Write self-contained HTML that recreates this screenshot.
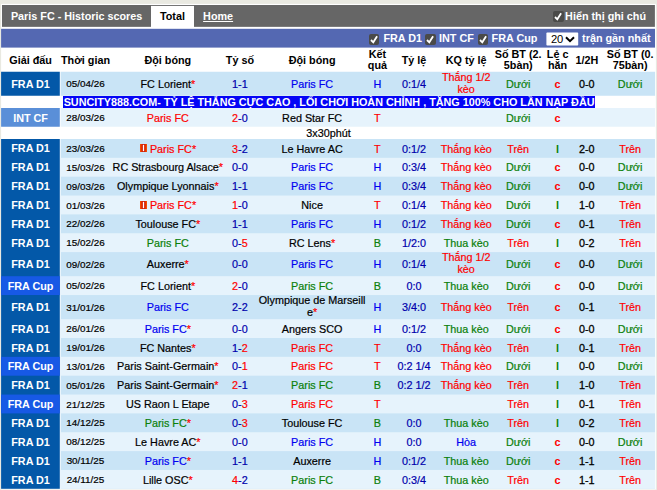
<!DOCTYPE html>
<html lang="vi"><head><meta charset="utf-8"><title>Paris FC - Historic scores</title>
<style>
html,body{margin:0;padding:0}
body{width:657px;height:490px;overflow:hidden;background:#e9e9e1;font-family:"Liberation Sans",Arial,sans-serif;font-size:10.8px;color:#000;position:relative}
#bgsvg{position:absolute;left:0;top:0}
#pg{position:absolute;left:1.3px;top:5px;width:654.2px;height:485px}
.abs{position:absolute}

#ttl{left:9.6px;top:0;height:22px;line-height:22.6px;color:#fff;font-weight:bold;white-space:nowrap}
#tab{left:149.7px;top:1px;width:43px;height:22px;color:#000;font-weight:bold;text-align:center;line-height:20.6px}
#home{left:201.8px;top:0;height:22px;line-height:22.6px;color:#fff;font-weight:bold;text-decoration:underline;white-space:nowrap}
#note{left:563.8px;top:0;height:22px;line-height:22.6px;color:#fff;font-weight:bold;white-space:nowrap}
.cb{position:absolute;width:10.6px;height:10.9px;background:#4a4a48;border-radius:2px}
.cb svg{position:absolute;left:0;top:0}

.bl{position:absolute;top:24px;height:18.5px;line-height:19.5px;color:#fff;font-weight:bold;white-space:nowrap}
#sel{left:545.1px;top:27.6px;width:31.8px;height:12.9px}
#sel span{position:absolute;left:4.5px;top:0;line-height:13.4px;font-size:11.2px;color:#000}
#sel svg{position:absolute;left:18.6px;top:3.3px}
.row{position:absolute;left:0;width:654px}
.bg{position:absolute;left:59.3px;right:0;top:0;bottom:0}

.lg{position:absolute;left:0;top:0;bottom:0;width:58.5px;color:#fff;font-weight:bold;display:flex;align-items:center;justify-content:center;white-space:nowrap;box-sizing:border-box}

.c{position:absolute;top:0;bottom:0;width:140px;display:flex;align-items:center;justify-content:center;text-align:center;white-space:nowrap;line-height:11.7px}
.c>span{display:block;position:relative;top:1px;-webkit-text-stroke:0.2px currentColor}
.h .c>span{top:1px;-webkit-text-stroke:0}
.dt{font-size:9.9px}
.c.dt>span{top:0.5px}
.c.two>span{top:0}
.h .c.two>span{top:1px}
.r{color:#ff0000}.b{color:#0000f0}.n{color:#0000ac}.g{color:#0a800a}.k{color:#000}
.B{font-weight:bold}
.c.B>span{-webkit-text-stroke:0}
.c.hv>span{-webkit-text-stroke:0.28px currentColor}
.h .c{font-weight:bold;line-height:11.5px}
.card{display:inline-block;width:7px;height:8px;background:linear-gradient(to right,#ff5a00,#d01800 35%,#d01800 65%,#ff5a00);vertical-align:0.4px;margin-right:3.4px;position:relative}
.card i{position:absolute;left:3px;top:1px;width:1px;height:6px;background:#fff;box-shadow:0 0 0 0.3px rgba(255,255,255,0.5)}
#ad{position:absolute;left:0.8px;width:654px;top:90.7px;height:12.3px;text-align:center;line-height:12.3px;white-space:nowrap}
#ad span{display:inline-block;height:12.3px;background:#0404f6;color:#fff;font-weight:bold;padding:0 0.5px}
</style></head><body>
<svg id="bgsvg" width="657" height="490" viewBox="0 0 657 490">
<rect x="1.10" y="3.90" width="654.80" height="485.60" fill="#fff"/>
<rect x="2.00" y="5.00" width="652.90" height="21.85" fill="#666"/>
<rect x="151.00" y="5.90" width="43.00" height="22.10" fill="#fff"/>
<rect x="1.10" y="28.80" width="653.90" height="18.80" fill="#5468b2"/>
<rect x="546.40" y="32.60" width="31.80" height="12.90" fill="#fff" rx="0.8"/>
<rect x="1.10" y="139.00" width="58.70" height="349.80" fill="#0358a8"/>
<rect x="60.60" y="139.00" width="594.45" height="349.80" fill="#c9e4f6"/>
<rect x="1.10" y="71.75" width="58.70" height="24.00" fill="#0358a8"/>
<rect x="60.60" y="71.75" width="594.45" height="24.00" fill="#c9e4f6"/>
<rect x="1.10" y="108.00" width="58.70" height="18.75" fill="#5a8fd8"/>
<rect x="60.60" y="108.00" width="594.45" height="18.75" fill="#e6f3fc"/>
<rect x="60.60" y="157.85" width="594.45" height="18.85" fill="#e6f3fc"/>
<rect x="60.60" y="195.55" width="594.45" height="18.85" fill="#e6f3fc"/>
<rect x="60.60" y="233.25" width="594.45" height="18.85" fill="#e6f3fc"/>
<rect x="1.10" y="276.20" width="58.70" height="18.85" fill="#1759e5"/>
<rect x="60.60" y="276.20" width="594.45" height="18.85" fill="#e6f3fc"/>
<rect x="60.60" y="319.15" width="594.45" height="18.85" fill="#e6f3fc"/>
<rect x="1.10" y="356.85" width="58.70" height="18.85" fill="#1759e5"/>
<rect x="60.60" y="356.85" width="594.45" height="18.85" fill="#e6f3fc"/>
<rect x="1.10" y="394.55" width="58.70" height="18.85" fill="#1759e5"/>
<rect x="60.60" y="394.55" width="594.45" height="18.85" fill="#e6f3fc"/>
<rect x="60.60" y="432.25" width="594.45" height="18.85" fill="#e6f3fc"/>
<rect x="60.60" y="469.95" width="594.45" height="18.85" fill="#e6f3fc"/>
</svg><div id="pg">
<div class="abs" id="ttl">Paris FC - Historic scores</div>
<div class="abs" id="tab">Total</div>
<div class="abs" id="home">Home</div>
<div class="cb" style="left:552px;top:6.2px"><svg width="10.6" height="10.9" viewBox="0 0 10.6 10.9"><path d="M2 6 L4.3 8.3 L8.1 2.2" fill="none" stroke="#fff" stroke-width="1.8"/></svg></div>
<div class="abs" id="note">Hiển thị ghi chú</div>

<div class="cb" style="left:367.3px;top:28.9px"><svg width="10.6" height="10.9" viewBox="0 0 10.6 10.9"><path d="M2 6 L4.3 8.3 L8.1 2.2" fill="none" stroke="#fff" stroke-width="1.8"/></svg></div><div class="bl" style="left:382.1px">FRA D1</div>
<div class="cb" style="left:423.8px;top:28.9px"><svg width="10.6" height="10.9" viewBox="0 0 10.6 10.9"><path d="M2 6 L4.3 8.3 L8.1 2.2" fill="none" stroke="#fff" stroke-width="1.8"/></svg></div><div class="bl" style="left:437.7px">INT CF</div>
<div class="cb" style="left:476.5px;top:28.9px"><svg width="10.6" height="10.9" viewBox="0 0 10.6 10.9"><path d="M2 6 L4.3 8.3 L8.1 2.2" fill="none" stroke="#fff" stroke-width="1.8"/></svg></div><div class="bl" style="left:490.3px">FRA Cup</div>
<div class="abs" id="sel"><span>20</span><svg width="10" height="7" viewBox="0 0 10 7"><path d="M1 1.2 L5 5.2 L9 1.2" fill="none" stroke="#000" stroke-width="2"/></svg></div>
<div class="bl" style="left:580.8px">trận gần nhất</div>
<div class="row h" style="top:42.4px;height:24.2px">
<div class="c " style="left:-40.7px"><span>Giải đấu</span></div>
<div class="c " style="left:14.2px"><span>Thời gian</span></div>
<div class="c " style="left:96.5px"><span>Đội bóng</span></div>
<div class="c " style="left:168.6px"><span>Tỷ số</span></div>
<div class="c " style="left:240.8px"><span>Đội bóng</span></div>
<div class="c  two" style="left:306.1px"><span>Kết<br>quả</span></div>
<div class="c " style="left:342.7px"><span>Tỷ lệ</span></div>
<div class="c " style="left:394.9px"><span>KQ tỷ lệ</span></div>
<div class="c  two" style="left:446.9px"><span>Số BT (2.<br>5bàn)</span></div>
<div class="c  two" style="left:486.3px"><span>Lẻ c<br>hẵn</span></div>
<div class="c " style="left:515.5px"><span>1/2H</span></div>
<div class="c  two" style="left:558.8px"><span>Số BT (0.<br>75bàn)</span></div>
</div>
<div id="ad"><span>SUNCITY888.COM- TỶ LỆ THẮNG CỰC CAO , LỐI CHƠI HOÀN CHỈNH , TẶNG 100% CHO LẦN NẠP ĐẦU</span></div>
<div class="row d" style="top:66.75px;height:24.00px"><div class="lg fd">FRA D1</div>
<div class="c dt" style="left:14.2px"><span>05/04/26</span></div>
<div class="c k" style="left:96.5px"><span>FC Lorient<span class="r" style="display:inline">*</span></span></div>
<div class="c n" style="left:168.6px"><span>1-1</span></div>
<div class="c b" style="left:240.8px"><span>Paris FC</span></div>
<div class="c b" style="left:306.1px"><span>H</span></div>
<div class="c n" style="left:342.7px"><span>0:1/4</span></div>
<div class="c r two" style="left:394.9px"><span>Thắng 1/2<br>kèo</span></div>
<div class="c g" style="left:446.9px"><span>Dưới</span></div>
<div class="c r B" style="left:486.3px"><span>c</span></div>
<div class="c k hv" style="left:515.5px"><span>0-0</span></div>
<div class="c g" style="left:558.8px"><span>Dưới</span></div>
</div>
<div class="row l" style="top:103.00px;height:18.75px"><div class="lg ic" style="padding-top:2px">INT CF</div>
<div class="c dt" style="left:14.2px"><span>28/03/26</span></div>
<div class="c r" style="left:96.5px"><span>Paris FC</span></div>
<div class="c n" style="left:168.6px"><span><span class="r" style="display:inline">2</span>-0</span></div>
<div class="c k" style="left:240.8px"><span>Red Star FC</span></div>
<div class="c r" style="left:306.1px"><span>T</span></div>
<div class="c g" style="left:446.9px"><span>Dưới</span></div>
<div class="c r B" style="left:486.3px"><span>c</span></div>
</div>
<div class="row" style="top:121.75px;height:12.25px"><div class="c" style="left:257.2px"><span>3x30phút</span></div></div>
<div class="row d" style="top:134.00px;height:18.85px"><div class="lg fd">FRA D1</div>
<div class="c dt" style="left:14.2px"><span>23/03/26</span></div>
<div class="c r" style="left:96.5px"><span><b class="card"><i></i></b>Paris FC<span class="r" style="display:inline">*</span></span></div>
<div class="c n" style="left:168.6px"><span><span class="r" style="display:inline">3</span>-2</span></div>
<div class="c k" style="left:240.8px"><span>Le Havre AC</span></div>
<div class="c r" style="left:306.1px"><span>T</span></div>
<div class="c n" style="left:342.7px"><span>0:1/2</span></div>
<div class="c r" style="left:394.9px"><span>Thắng kèo</span></div>
<div class="c r" style="left:446.9px"><span>Trên</span></div>
<div class="c g B" style="left:486.3px"><span>l</span></div>
<div class="c k hv" style="left:515.5px"><span>2-0</span></div>
<div class="c r" style="left:558.8px"><span>Trên</span></div>
</div>
<div class="row l" style="top:152.85px;height:18.85px"><div class="lg fd">FRA D1</div>
<div class="c dt" style="left:14.2px"><span>15/03/26</span></div>
<div class="c k" style="left:96.5px"><span>RC Strasbourg Alsace<span class="r" style="display:inline">*</span></span></div>
<div class="c n" style="left:168.6px"><span>0-0</span></div>
<div class="c b" style="left:240.8px"><span>Paris FC</span></div>
<div class="c b" style="left:306.1px"><span>H</span></div>
<div class="c n" style="left:342.7px"><span>0:3/4</span></div>
<div class="c r" style="left:394.9px"><span>Thắng kèo</span></div>
<div class="c g" style="left:446.9px"><span>Dưới</span></div>
<div class="c r B" style="left:486.3px"><span>c</span></div>
<div class="c k hv" style="left:515.5px"><span>0-0</span></div>
<div class="c g" style="left:558.8px"><span>Dưới</span></div>
</div>
<div class="row d" style="top:171.70px;height:18.85px"><div class="lg fd">FRA D1</div>
<div class="c dt" style="left:14.2px"><span>09/03/26</span></div>
<div class="c k" style="left:96.5px"><span>Olympique Lyonnais<span class="r" style="display:inline">*</span></span></div>
<div class="c n" style="left:168.6px"><span>1-1</span></div>
<div class="c b" style="left:240.8px"><span>Paris FC</span></div>
<div class="c b" style="left:306.1px"><span>H</span></div>
<div class="c n" style="left:342.7px"><span>0:3/4</span></div>
<div class="c r" style="left:394.9px"><span>Thắng kèo</span></div>
<div class="c g" style="left:446.9px"><span>Dưới</span></div>
<div class="c r B" style="left:486.3px"><span>c</span></div>
<div class="c k hv" style="left:515.5px"><span>0-0</span></div>
<div class="c g" style="left:558.8px"><span>Dưới</span></div>
</div>
<div class="row l" style="top:190.55px;height:18.85px"><div class="lg fd">FRA D1</div>
<div class="c dt" style="left:14.2px"><span>01/03/26</span></div>
<div class="c r" style="left:96.5px"><span><b class="card"><i></i></b>Paris FC<span class="r" style="display:inline">*</span></span></div>
<div class="c n" style="left:168.6px"><span><span class="r" style="display:inline">1</span>-0</span></div>
<div class="c k" style="left:240.8px"><span>Nice</span></div>
<div class="c r" style="left:306.1px"><span>T</span></div>
<div class="c n" style="left:342.7px"><span>0:1/4</span></div>
<div class="c r" style="left:394.9px"><span>Thắng kèo</span></div>
<div class="c g" style="left:446.9px"><span>Dưới</span></div>
<div class="c g B" style="left:486.3px"><span>l</span></div>
<div class="c k hv" style="left:515.5px"><span>1-0</span></div>
<div class="c r" style="left:558.8px"><span>Trên</span></div>
</div>
<div class="row d" style="top:209.40px;height:18.85px"><div class="lg fd">FRA D1</div>
<div class="c dt" style="left:14.2px"><span>22/02/26</span></div>
<div class="c k" style="left:96.5px"><span>Toulouse FC<span class="r" style="display:inline">*</span></span></div>
<div class="c n" style="left:168.6px"><span>1-1</span></div>
<div class="c b" style="left:240.8px"><span>Paris FC</span></div>
<div class="c b" style="left:306.1px"><span>H</span></div>
<div class="c n" style="left:342.7px"><span>0:1/2</span></div>
<div class="c r" style="left:394.9px"><span>Thắng kèo</span></div>
<div class="c g" style="left:446.9px"><span>Dưới</span></div>
<div class="c r B" style="left:486.3px"><span>c</span></div>
<div class="c k hv" style="left:515.5px"><span>0-1</span></div>
<div class="c r" style="left:558.8px"><span>Trên</span></div>
</div>
<div class="row l" style="top:228.25px;height:18.85px"><div class="lg fd">FRA D1</div>
<div class="c dt" style="left:14.2px"><span>15/02/26</span></div>
<div class="c g" style="left:96.5px"><span>Paris FC</span></div>
<div class="c n" style="left:168.6px"><span>0-<span class="r" style="display:inline">5</span></span></div>
<div class="c k" style="left:240.8px"><span>RC Lens<span class="r" style="display:inline">*</span></span></div>
<div class="c g" style="left:306.1px"><span>B</span></div>
<div class="c n" style="left:342.7px"><span>1/2:0</span></div>
<div class="c g" style="left:394.9px"><span>Thua kèo</span></div>
<div class="c r" style="left:446.9px"><span>Trên</span></div>
<div class="c g B" style="left:486.3px"><span>l</span></div>
<div class="c k hv" style="left:515.5px"><span>0-2</span></div>
<div class="c r" style="left:558.8px"><span>Trên</span></div>
</div>
<div class="row d" style="top:247.10px;height:24.10px"><div class="lg fd">FRA D1</div>
<div class="c dt" style="left:14.2px"><span>09/02/26</span></div>
<div class="c k" style="left:96.5px"><span>Auxerre<span class="r" style="display:inline">*</span></span></div>
<div class="c n" style="left:168.6px"><span>0-0</span></div>
<div class="c b" style="left:240.8px"><span>Paris FC</span></div>
<div class="c b" style="left:306.1px"><span>H</span></div>
<div class="c n" style="left:342.7px"><span>0:1/4</span></div>
<div class="c r two" style="left:394.9px"><span>Thắng 1/2<br>kèo</span></div>
<div class="c g" style="left:446.9px"><span>Dưới</span></div>
<div class="c r B" style="left:486.3px"><span>c</span></div>
<div class="c k hv" style="left:515.5px"><span>0-0</span></div>
<div class="c g" style="left:558.8px"><span>Dưới</span></div>
</div>
<div class="row l" style="top:271.20px;height:18.85px"><div class="lg fc">FRA Cup</div>
<div class="c dt" style="left:14.2px"><span>05/02/26</span></div>
<div class="c k" style="left:96.5px"><span>FC Lorient<span class="r" style="display:inline">*</span></span></div>
<div class="c n" style="left:168.6px"><span><span class="r" style="display:inline">2</span>-0</span></div>
<div class="c g" style="left:240.8px"><span>Paris FC</span></div>
<div class="c g" style="left:306.1px"><span>B</span></div>
<div class="c n" style="left:342.7px"><span>0:0</span></div>
<div class="c g" style="left:394.9px"><span>Thua kèo</span></div>
<div class="c g" style="left:446.9px"><span>Dưới</span></div>
<div class="c r B" style="left:486.3px"><span>c</span></div>
<div class="c k hv" style="left:515.5px"><span>0-0</span></div>
<div class="c g" style="left:558.8px"><span>Dưới</span></div>
</div>
<div class="row d" style="top:290.05px;height:24.10px"><div class="lg fd">FRA D1</div>
<div class="c dt" style="left:14.2px"><span>31/01/26</span></div>
<div class="c b" style="left:96.5px"><span>Paris FC</span></div>
<div class="c n" style="left:168.6px"><span>2-2</span></div>
<div class="c k two" style="left:240.8px"><span>Olympique de Marseill<br>e<span class="r" style="display:inline">*</span></span></div>
<div class="c b" style="left:306.1px"><span>H</span></div>
<div class="c n" style="left:342.7px"><span>3/4:0</span></div>
<div class="c r" style="left:394.9px"><span>Thắng kèo</span></div>
<div class="c r" style="left:446.9px"><span>Trên</span></div>
<div class="c r B" style="left:486.3px"><span>c</span></div>
<div class="c k hv" style="left:515.5px"><span>0-1</span></div>
<div class="c r" style="left:558.8px"><span>Trên</span></div>
</div>
<div class="row l" style="top:314.15px;height:18.85px"><div class="lg fd">FRA D1</div>
<div class="c dt" style="left:14.2px"><span>26/01/26</span></div>
<div class="c b" style="left:96.5px"><span>Paris FC<span class="r" style="display:inline">*</span></span></div>
<div class="c n" style="left:168.6px"><span>0-0</span></div>
<div class="c k" style="left:240.8px"><span>Angers SCO</span></div>
<div class="c b" style="left:306.1px"><span>H</span></div>
<div class="c n" style="left:342.7px"><span>0:1/2</span></div>
<div class="c g" style="left:394.9px"><span>Thua kèo</span></div>
<div class="c g" style="left:446.9px"><span>Dưới</span></div>
<div class="c r B" style="left:486.3px"><span>c</span></div>
<div class="c k hv" style="left:515.5px"><span>0-0</span></div>
<div class="c g" style="left:558.8px"><span>Dưới</span></div>
</div>
<div class="row d" style="top:333.00px;height:18.85px"><div class="lg fd" style="padding-top:2px">FRA D1</div>
<div class="c dt" style="left:14.2px"><span>19/01/26</span></div>
<div class="c k" style="left:96.5px"><span>FC Nantes<span class="r" style="display:inline">*</span></span></div>
<div class="c n" style="left:168.6px"><span>1-<span class="r" style="display:inline">2</span></span></div>
<div class="c r" style="left:240.8px"><span>Paris FC</span></div>
<div class="c r" style="left:306.1px"><span>T</span></div>
<div class="c n" style="left:342.7px"><span>0:0</span></div>
<div class="c r" style="left:394.9px"><span>Thắng kèo</span></div>
<div class="c r" style="left:446.9px"><span>Trên</span></div>
<div class="c g B" style="left:486.3px"><span>l</span></div>
<div class="c k hv" style="left:515.5px"><span>0-1</span></div>
<div class="c r" style="left:558.8px"><span>Trên</span></div>
</div>
<div class="row l" style="top:351.85px;height:18.85px"><div class="lg fc">FRA Cup</div>
<div class="c dt" style="left:14.2px"><span>13/01/26</span></div>
<div class="c k" style="left:96.5px"><span>Paris Saint-Germain<span class="r" style="display:inline">*</span></span></div>
<div class="c n" style="left:168.6px"><span>0-<span class="r" style="display:inline">1</span></span></div>
<div class="c r" style="left:240.8px"><span>Paris FC</span></div>
<div class="c r" style="left:306.1px"><span>T</span></div>
<div class="c n" style="left:342.7px"><span>0:2 1/4</span></div>
<div class="c r" style="left:394.9px"><span>Thắng kèo</span></div>
<div class="c g" style="left:446.9px"><span>Dưới</span></div>
<div class="c g B" style="left:486.3px"><span>l</span></div>
<div class="c k hv" style="left:515.5px"><span>0-0</span></div>
<div class="c g" style="left:558.8px"><span>Dưới</span></div>
</div>
<div class="row d" style="top:370.70px;height:18.85px"><div class="lg fd">FRA D1</div>
<div class="c dt" style="left:14.2px"><span>05/01/26</span></div>
<div class="c k" style="left:96.5px"><span>Paris Saint-Germain<span class="r" style="display:inline">*</span></span></div>
<div class="c n" style="left:168.6px"><span><span class="r" style="display:inline">2</span>-1</span></div>
<div class="c g" style="left:240.8px"><span>Paris FC</span></div>
<div class="c g" style="left:306.1px"><span>B</span></div>
<div class="c n" style="left:342.7px"><span>0:2 1/2</span></div>
<div class="c r" style="left:394.9px"><span>Thắng kèo</span></div>
<div class="c r" style="left:446.9px"><span>Trên</span></div>
<div class="c g B" style="left:486.3px"><span>l</span></div>
<div class="c k hv" style="left:515.5px"><span>1-0</span></div>
<div class="c r" style="left:558.8px"><span>Trên</span></div>
</div>
<div class="row l" style="top:389.55px;height:18.85px"><div class="lg fc">FRA Cup</div>
<div class="c dt" style="left:14.2px"><span>21/12/25</span></div>
<div class="c k" style="left:96.5px"><span>US Raon L Etape</span></div>
<div class="c n" style="left:168.6px"><span>0-<span class="r" style="display:inline">3</span></span></div>
<div class="c r" style="left:240.8px"><span>Paris FC</span></div>
<div class="c r" style="left:306.1px"><span>T</span></div>
<div class="c r" style="left:446.9px"><span>Trên</span></div>
<div class="c g B" style="left:486.3px"><span>l</span></div>
<div class="c k hv" style="left:515.5px"><span>0-1</span></div>
<div class="c r" style="left:558.8px"><span>Trên</span></div>
</div>
<div class="row d" style="top:408.40px;height:18.85px"><div class="lg fd">FRA D1</div>
<div class="c dt" style="left:14.2px"><span>14/12/25</span></div>
<div class="c g" style="left:96.5px"><span>Paris FC<span class="r" style="display:inline">*</span></span></div>
<div class="c n" style="left:168.6px"><span>0-<span class="r" style="display:inline">3</span></span></div>
<div class="c k" style="left:240.8px"><span>Toulouse FC</span></div>
<div class="c g" style="left:306.1px"><span>B</span></div>
<div class="c n" style="left:342.7px"><span>0:0</span></div>
<div class="c g" style="left:394.9px"><span>Thua kèo</span></div>
<div class="c r" style="left:446.9px"><span>Trên</span></div>
<div class="c g B" style="left:486.3px"><span>l</span></div>
<div class="c k hv" style="left:515.5px"><span>0-2</span></div>
<div class="c r" style="left:558.8px"><span>Trên</span></div>
</div>
<div class="row l" style="top:427.25px;height:18.85px"><div class="lg fd">FRA D1</div>
<div class="c dt" style="left:14.2px"><span>08/12/25</span></div>
<div class="c k" style="left:96.5px"><span>Le Havre AC<span class="r" style="display:inline">*</span></span></div>
<div class="c n" style="left:168.6px"><span>0-0</span></div>
<div class="c b" style="left:240.8px"><span>Paris FC</span></div>
<div class="c b" style="left:306.1px"><span>H</span></div>
<div class="c n" style="left:342.7px"><span>0:0</span></div>
<div class="c b" style="left:394.9px"><span>Hòa</span></div>
<div class="c g" style="left:446.9px"><span>Dưới</span></div>
<div class="c r B" style="left:486.3px"><span>c</span></div>
<div class="c k hv" style="left:515.5px"><span>0-0</span></div>
<div class="c g" style="left:558.8px"><span>Dưới</span></div>
</div>
<div class="row d" style="top:446.10px;height:18.85px"><div class="lg fd">FRA D1</div>
<div class="c dt" style="left:14.2px"><span>30/11/25</span></div>
<div class="c b" style="left:96.5px"><span>Paris FC<span class="r" style="display:inline">*</span></span></div>
<div class="c n" style="left:168.6px"><span>1-1</span></div>
<div class="c k" style="left:240.8px"><span>Auxerre</span></div>
<div class="c b" style="left:306.1px"><span>H</span></div>
<div class="c n" style="left:342.7px"><span>0:1/2</span></div>
<div class="c g" style="left:394.9px"><span>Thua kèo</span></div>
<div class="c g" style="left:446.9px"><span>Dưới</span></div>
<div class="c r B" style="left:486.3px"><span>c</span></div>
<div class="c k hv" style="left:515.5px"><span>1-1</span></div>
<div class="c r" style="left:558.8px"><span>Trên</span></div>
</div>
<div class="row l" style="top:464.95px;height:18.85px"><div class="lg fd" style="padding-top:2px">FRA D1</div>
<div class="c dt" style="left:14.2px"><span>24/11/25</span></div>
<div class="c k" style="left:96.5px"><span>Lille OSC<span class="r" style="display:inline">*</span></span></div>
<div class="c n" style="left:168.6px"><span><span class="r" style="display:inline">4</span>-2</span></div>
<div class="c g" style="left:240.8px"><span>Paris FC</span></div>
<div class="c g" style="left:306.1px"><span>B</span></div>
<div class="c n" style="left:342.7px"><span>0:3/4</span></div>
<div class="c g" style="left:394.9px"><span>Thua kèo</span></div>
<div class="c r" style="left:446.9px"><span>Trên</span></div>
<div class="c r B" style="left:486.3px"><span>c</span></div>
<div class="c k hv" style="left:515.5px"><span>1-1</span></div>
<div class="c r" style="left:558.8px"><span>Trên</span></div>
</div>
</div></body></html>
